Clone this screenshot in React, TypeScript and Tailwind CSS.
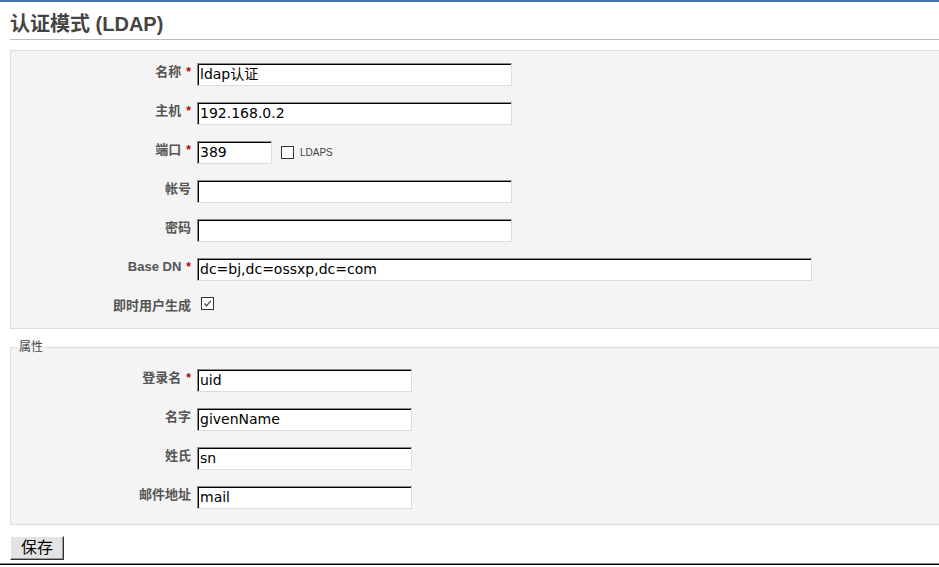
import type { ReactNode } from "react";

const FONT = "font-['Liberation_Sans','Noto_Sans_CJK_SC',sans-serif]";

function Req() {
  return <span className="ml-[5px] text-[12px] font-bold text-[#b00000]">*</span>;
}

function Row({
  label,
  required,
  children,
}: {
  label: string;
  required?: boolean;
  children: ReactNode;
}) {
  return (
    <div className="flex h-[23px] items-start">
      <div className="w-[182px] shrink-0 pr-[2px] pt-[1px] text-right text-[13px] font-bold leading-[16px] text-[#555]">
        {label}
        {required && <Req />}
      </div>
      <div className="ml-[4px] flex items-center">{children}</div>
    </div>
  );
}

function Field({ value = "", width }: { value?: string; width: string }) {
  return (
    <div
      className={`h-[23px] ${width} border border-t-[#8a8a8a] border-l-[#8a8a8a] border-b-[#dcdcdc] border-r-[#dcdcdc] bg-white pl-[2px] font-['DejaVu_Sans','Noto_Sans_CJK_SC',sans-serif] text-[14px] leading-[20px] text-black shadow-[inset_1px_1px_0_#000]`}
    >
      {value}
    </div>
  );
}

function Box({ checked }: { checked?: boolean }) {
  return (
    <span className="flex h-[13px] w-[13px] items-center justify-center border border-[#333] bg-white">
      {checked && (
        <svg width="9" height="9" viewBox="0 0 9 9">
          <path d="M1.5 4.5 L3.5 6.8 L7.8 1.8" fill="none" stroke="#444" strokeWidth="1.3" />
        </svg>
      )}
    </span>
  );
}

export default function App() {
  return (
    <div className={`min-h-[567px] bg-white ${FONT}`}>
      <div className="h-[2px] bg-[#4a74a6]" />
      <div className="ml-[10px] mt-[10px] border-b border-[#bbbbbb] pb-[3px]">
        <h2 className="text-[20px] font-bold leading-[24px] text-[#444]">认证模式 (LDAP)</h2>
      </div>

      <div className="ml-[10px] mt-[10px] flex flex-col gap-[16px] border border-r-0 border-[#dddddd] bg-[#f4f4f4] pb-[8px] pt-[12px]">
        <Row label="名称" required>
          <Field value="ldap认证" width="w-[315px]" />
        </Row>
        <Row label="主机" required>
          <Field value="192.168.0.2" width="w-[315px]" />
        </Row>
        <Row label="端口" required>
          <Field value="389" width="w-[75px]" />
          <span className="ml-[9px]">
            <Box />
          </span>
          <span className="ml-[6px] text-[10px] text-[#444]">LDAPS</span>
        </Row>
        <Row label="帐号">
          <Field width="w-[315px]" />
        </Row>
        <Row label="密码">
          <Field width="w-[315px]" />
        </Row>
        <Row label="Base DN" required>
          <Field value="dc=bj,dc=ossxp,dc=com" width="w-[615px]" />
        </Row>
        <Row label="即时用户生成">
          <span className="ml-[4px]">
            <Box checked />
          </span>
        </Row>
      </div>

      <fieldset className="ml-[10px] mt-[10px] flex flex-col gap-[16px] border border-r-0 border-[#dddddd] bg-[#f4f4f4] pb-[15px] pt-[14px]">
        <legend className="ml-[6px] px-[2px] text-[12px] leading-[16px] text-[#444]">属性</legend>
        <Row label="登录名" required>
          <Field value="uid" width="w-[215px]" />
        </Row>
        <Row label="名字">
          <Field value="givenName" width="w-[215px]" />
        </Row>
        <Row label="姓氏">
          <Field value="sn" width="w-[215px]" />
        </Row>
        <Row label="邮件地址">
          <Field value="mail" width="w-[215px]" />
        </Row>
      </fieldset>

      <button className="ml-[10px] mt-[11px] h-[24px] w-[54px] border border-t-[#fff] border-l-[#fff] border-b-[#333] border-r-[#333] bg-[#e4e4e4] text-[16px] leading-[20px] text-black shadow-[inset_-1px_-1px_0_#999]">
        保存
      </button>
      <div className="mt-[3px] h-[6px] border-t border-t-[#888] shadow-[inset_0_1px_0_#000]" />
    </div>
  );
}
